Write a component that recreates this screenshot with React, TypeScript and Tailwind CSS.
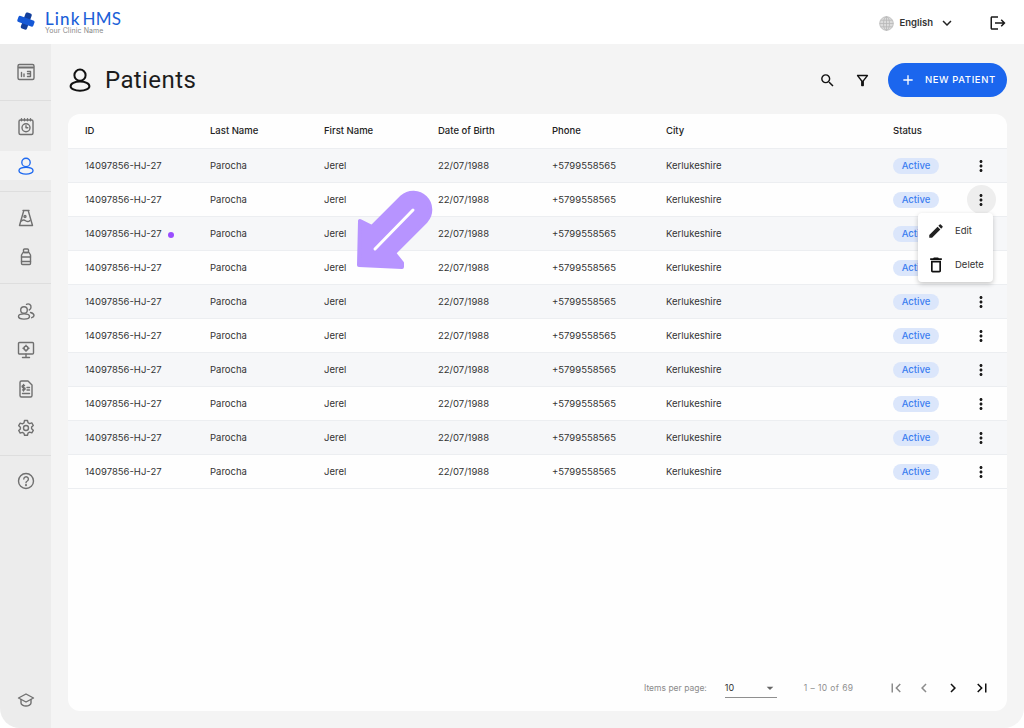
import React from "react";
import {
  MdSearch, MdOutlineFilterAlt, MdAdd, MdLogout, MdKeyboardArrowDown, MdMoreVert, MdEdit,
  MdOutlineDelete, MdFirstPage, MdLastPage, MdChevronLeft, MdChevronRight, MdArrowDropDown,
} from "react-icons/md";

const Person = ({ size = 24, color = "currentColor", sw = 2 }: { size?: number; color?: string; sw?: number }) => (
  <svg width={size} height={size} viewBox="0 0 24 24" fill="none" stroke={color} strokeWidth={sw}>
    <circle cx="12" cy="7.2" r="5.6" />
    <ellipse cx="12" cy="18.2" rx="9.4" ry="4.6" />
  </svg>
);

const S = ({ children }: { children: React.ReactNode }) => (
  <svg width="20" height="20" viewBox="0 0 20 20" fill="none" stroke="#707070" strokeWidth="1.4" strokeLinecap="round" strokeLinejoin="round">
    {children}
  </svg>
);

const icons: Record<string, React.ReactNode> = {
  dash: (<S><rect x="2" y="2.5" width="16" height="15" rx="1.5" /><path d="M3 5.500h14" strokeWidth="2" /><path d="M5.500 14.500v-4M8 14.500v-2.500M11.500 9.500h3v2.200h-3M14.500 11.700v2.800h-3" /></S>),
  cal: (<S><rect x="3" y="3" width="14" height="14.5" rx="1.5" /><path d="M5.5 1.8v2M8.5 1.8v2M11.5 1.8v2M14.5 1.8v2" /><circle cx="10" cy="10.8" r="4" /><path d="M10 8.8v2h1.8" /></S>),
  flask: (<S><path d="M7 2.500h6M7.800 2.500 3.500 17.500h13L12.200 2.500" /><path d="M5.500 13c2-2 3-1 4.500 0s3 .5 4-.5" /><circle cx="9" cy="8.500" r="1" /></S>),
  bottle: (<S><rect x="7.500" y="2" width="5" height="3.500" rx="1" /><path d="M7 5.500 5.500 8v8.500a1 1 0 0 0 1 1h7a1 1 0 0 0 1-1V8L13 5.500z" /><path d="M5.500 10h9M5.500 14.500h9" /></S>),
  users: (<S><circle cx="8" cy="9" r="3.300" /><ellipse cx="8" cy="15.500" rx="5.500" ry="2.600" /><path d="M10.500 3.300a3 3 0 0 1 4.500 3 3 3 0 0 1-1.800 2.700M14.500 11.500c2 .5 3.500 1.500 3.500 3 0 1-1 1.800-2.300 2.200" /></S>),
  monitor: (<S><rect x="2.500" y="2.500" width="15" height="11.500" rx="1" /><path d="M10 14v3.500M6.500 17.500h7" /><circle cx="10" cy="8.200" r="2" /><path d="M10 5.200v1M10 10.200v1M7 8.200h1M12 8.200h1" /></S>),
  bill: (<S><path d="M4 3.500a1.500 1.500 0 0 1 1.500-1.500H12l4 4v10.500a1.500 1.500 0 0 1-1.500 1.500h-9A1.500 1.500 0 0 1 4 16.500z" /><path d="M8.500 6.500H7.200a1 1 0 0 0 0 2.200h.8a1 1 0 0 1 0 2.200H6.500M7.500 5.500v6.500M11 8.500h2.500M11 11h2.500M6.500 14.500h7" /></S>),
  gear: (<S><circle cx="10" cy="10" r="2.500" /><path d="M8.500 2.500h3l.5 2.200 1.600.9 2.200-.7 1.500 2.600-1.700 1.500v1.800l1.700 1.500-1.500 2.600-2.200-.7-1.600.9-.5 2.200h-3L8 15.300l-1.600-.9-2.200.7-1.500-2.600 1.700-1.500V9.200L2.700 7.700l1.500-2.600 2.200.7 1.600-.9z" /></S>),
  help: (<S><circle cx="10" cy="10" r="7.500" /><path d="M7.800 8a2.300 2.300 0 1 1 3.500 2c-.9.500-1.300 1-1.300 1.800" /><circle cx="10" cy="14.200" r=".4" /></S>),
  grad: (<S><path d="M10 4 2.500 8 10 12l7.500-4z" /><path d="M5 9.500V13c0 1.500 2.500 3 5 3s5-1.500 5-3V9.500" /></S>),
};

const Nav = ({ name, active }: { name?: string; active?: boolean }) => (
  <div className={`h-[29px] flex items-center justify-center ${active ? "bg-[#f4f4f4]" : ""}`}>
    {active ? <Person size={18} color="#1f6af0" sw={1.8} /> : icons[name!]}
  </div>
);

const Group = ({ h, children, last }: { h: string; children: React.ReactNode; last?: boolean }) => (
  <div className={`${h} flex flex-col justify-center gap-[10px] ${last ? "" : "border-b border-[#dedede]"}`}>{children}</div>
);

const cols = "grid grid-cols-[125px_114px_114px_114px_114px_227px_71px_34px] pl-[17px] items-center";

const Row = ({ i }: { i: number }) => (
  <div className={`${cols} h-[34px] border-b border-[#eceef1] text-[9.5px] text-[#333333] ${i % 2 === 0 ? "bg-[#f6f7f9]" : "bg-[#fefefe]"}`}>
    <div className="flex items-center pt-[2px]">
      14097856-HJ-27
      {i === 2 && <span className="ml-[6px] w-[6px] h-[6px] rounded-full bg-[#9a4dff]" />}
    </div>
    <div className="pt-[2px]">Parocha</div>
    <div className="pt-[2px]">Jerel</div>
    <div className="pt-[2px]">22/07/1988</div>
    <div className="pt-[2px]">+5799558565</div>
    <div className="pt-[2px]">Kerlukeshire</div>
    <div>
      <span className="inline-flex w-[46px] h-[16px] pt-[1px] items-center justify-center rounded-full bg-[#dbe6fb] text-[#3b7df0] font-medium text-[9.5px]">Active</span>
    </div>
    <div className="flex justify-center">
      <span className={`w-[29px] h-[29px] rounded-full flex items-center justify-center ${i === 1 ? "bg-[#eeeeee]" : ""}`}>
        <MdMoreVert size={18} color="#1a1a1a" />
      </span>
    </div>
  </div>
);

export default function App() {
  return (
    <div className="relative w-[1024px] h-[728px] bg-white flex flex-col overflow-hidden font-['Inter','Liberation_Sans',sans-serif]">
      <header className="h-[44px] shrink-0 bg-white flex items-center pl-[17px] pr-[17px]">
        <svg width="18" height="18" viewBox="0 0 18 18" className="mb-[2px]">
          <g transform="rotate(20 9 9)">
            <rect x="6" y="0.500" width="6.500" height="17" rx="1.800" fill="#123f9c" />
            <rect x="0.500" y="6" width="17" height="6.500" rx="1.800" fill="#1558d6" />
          </g>
        </svg>
        <div className="ml-[10px] flex flex-col">
          <div className="flex text-[17px] leading-[17px] font-['Lato',sans-serif] text-[#1c5fd8]">
            <span className="font-medium tracking-[1.1px]">Link</span>
            <span className="ml-[2px] tracking-[0.2px]">HMS</span>
          </div>
          <div className="text-[7px] leading-[8px] text-[#8a8a8a] tracking-[0.1px]">Your Clinic Name</div>
        </div>
        <div className="ml-auto flex items-center pt-[2px]">
          <svg width="15" height="15" viewBox="0 0 16 16" fill="#dcdcdc" stroke="#b5b5b5" strokeWidth="0.8">
            <circle cx="8" cy="8" r="7.300" />
            <ellipse cx="8" cy="8" rx="3.200" ry="7.300" fill="none" />
            <path d="M.7 8h14.600M1.700 4.500h12.600M1.700 11.500h12.600M8 .7v14.600" fill="none" />
          </svg>
          <span className="ml-[5px] text-[9.5px] font-semibold text-[#333]">English</span>
          <MdKeyboardArrowDown size={18} color="#222" className="ml-[5px]" />
          <MdLogout size={18} color="#1a1a1a" className="ml-[33px]" />
        </div>
      </header>
      <div className="flex-1 flex min-h-0">
        <aside className="w-[51px] shrink-0 bg-[#ececec] rounded-bl-[20px] flex flex-col">
          <Group h="h-[57px]"><Nav name="dash" /></Group>
          <Group h="h-[91px]"><Nav name="cal" /><Nav active /></Group>
          <Group h="h-[92px]"><Nav name="flask" /><Nav name="bottle" /></Group>
          <Group h="h-[172px]"><Nav name="users" /><Nav name="monitor" /><Nav name="bill" /><Nav name="gear" /></Group>
          <Group h="h-[50px]" last><Nav name="help" /></Group>
          <div className="mt-auto mb-[14px]"><Nav name="grad" /></div>
        </aside>
        <main className="flex-1 bg-[#f4f4f4] rounded-br-[20px] pl-[17px] pr-[17px] pb-[17px] flex flex-col min-w-0">
          <div className="h-[70px] shrink-0 flex items-center pt-[2px]">
            <Person size={24} color="#111" sw={2} />
            <h1 className="ml-[13px] text-[24px] font-normal font-['Roboto',sans-serif] tracking-[0.4px] text-[#1c1c1c]">Patients</h1>
            <div className="ml-auto flex items-center">
              <MdSearch size={17} color="#111" />
              <MdOutlineFilterAlt size={17} color="#111" className="ml-[18px]" />
              <button className="ml-[17px] w-[119px] h-[34px] rounded-full bg-[#1b66ee] text-white flex items-center pl-[12px]">
                <MdAdd size={16} />
                <span className="ml-[9px] text-[9.500px] font-medium tracking-[0.6px]">NEW PATIENT</span>
              </button>
            </div>
          </div>
          <section className="flex-1 bg-[#fefefe] rounded-[12px] overflow-hidden flex flex-col">
            <div className={`${cols} h-[35px] shrink-0 text-[9.5px] font-medium text-[#222] border-b border-[#eceef1]`}>
              <div className="pt-[1px]">ID</div><div className="pt-[1px]">Last Name</div><div className="pt-[1px]">First Name</div><div className="pt-[1px]">Date of Birth</div><div className="pt-[1px]">Phone</div><div className="pt-[1px]">City</div><div className="pt-[1px]">Status</div><div />
            </div>
            {Array.from({ length: 10 }).map((_, i) => <Row key={i} i={i} />)}
            <div className="mt-auto h-[46px] flex items-center text-[8.5px] text-[#8b8b8b]">
              <span className="ml-[576px]">Items per page:</span>
              <div className="ml-[18px] w-[52px] h-[19px] border-b border-[#8f8f8f] flex items-center justify-between text-[9px] text-[#333]">
                <span>10</span>
                <MdArrowDropDown size={16} color="#666" className="mr-[-1px]" />
              </div>
              <span className="ml-[27px] text-[#909090] tracking-[0.4px]">1 – 10 of 69</span>
              <div className="ml-[33px] flex items-center gap-[10.7px]">
                <MdFirstPage size={18} color="#8c8c8c" />
                <MdChevronLeft size={18} color="#8c8c8c" />
                <MdChevronRight size={18} color="#111" />
                <MdLastPage size={18} color="#111" />
              </div>
            </div>
          </section>
        </main>
      </div>
      <div className="absolute left-[918px] top-[213px] w-[75px] h-[69px] bg-white rounded-[4px] shadow-[0_2px_5px_rgba(0,0,0,0.22)] flex flex-col justify-center text-[9.5px] text-[#333]">
        <div className="h-[34px] flex items-center pl-[9px]"><MdEdit size={18} color="#222" /><span className="ml-[10px] pt-[2px]">Edit</span></div>
        <div className="h-[34px] flex items-center pl-[8px]"><MdOutlineDelete size={20} color="#111" /><span className="ml-[9px] pt-[2px]">Delete</span></div>
      </div>
      <svg className="absolute left-[340px] top-[180px]" width="110" height="100" viewBox="0 0 110 100" fill="none" strokeLinecap="round" strokeLinejoin="round">
        <path d="M62 17 32 47 20 41 19 85 62 87 62 83 54 73 86 41A17 17 0 0 0 62 17Z" fill="#b794ff" stroke="#b794ff" strokeWidth="4" />
        <path d="M73 30 35 69" stroke="#fff" strokeWidth="3" />
      </svg>
    </div>
  );
}
